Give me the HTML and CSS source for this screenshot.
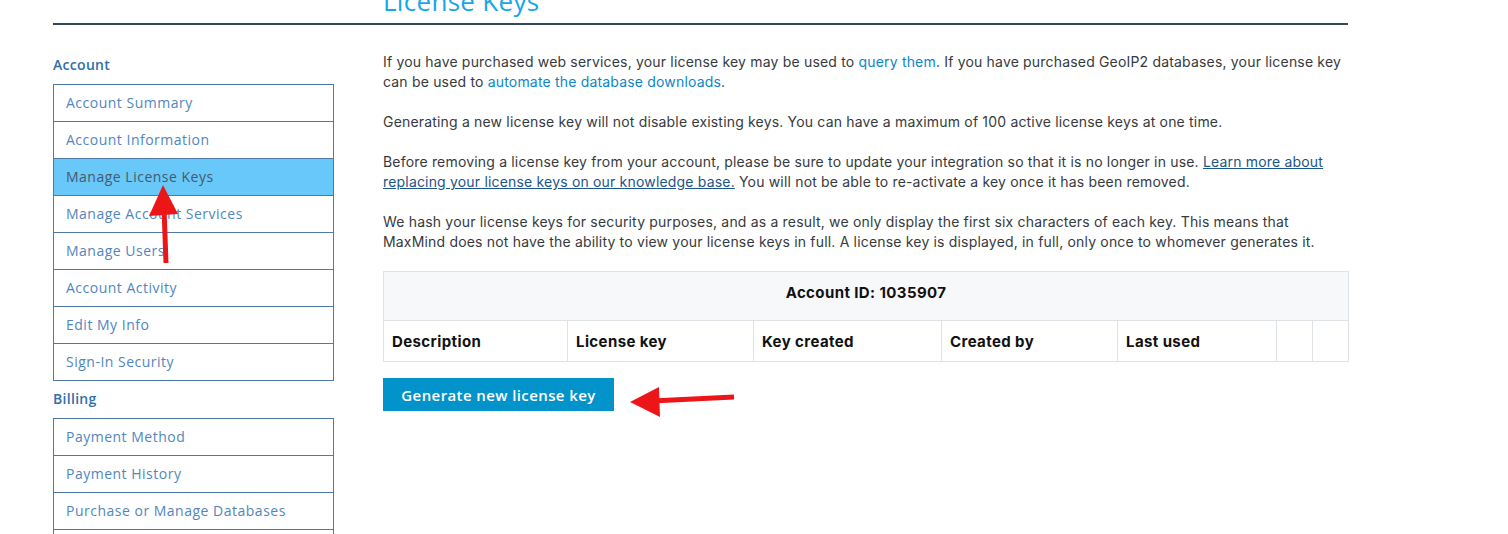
FILE: index.html
```html
<!DOCTYPE html>
<html>

<head>
	<meta charset="UTF-8">
	<title>License Keys</title>
	<link rel="stylesheet" href="styles.css">
</head>

<body>
	<div class="page">
		<header class="page-head">
			<div></div>
			<h1>License Keys</h1>
		</header>

		<div class="layout">
			<nav class="sidebar">
				<h4>Account</h4>
				<ul class="menu">
					<li><a href="#">Account Summary</a></li>
					<li><a href="#">Account Information</a></li>
					<li class="active"><a href="#">Manage License Keys</a></li>
					<li><a href="#">Manage Account Services</a></li>
					<li><a href="#">Manage Users</a></li>
					<li><a href="#">Account Activity</a></li>
					<li><a href="#">Edit My Info</a></li>
					<li><a href="#">Sign-In Security</a></li>
				</ul>
				<h4>Billing</h4>
				<ul class="menu">
					<li><a href="#">Payment Method</a></li>
					<li><a href="#">Payment History</a></li>
					<li><a href="#">Purchase or Manage Databases</a></li>
					<li><a href="#">Order History</a></li>
				</ul>
			</nav>

			<main class="content">
				<p>If you have purchased web services, your license key may be used to <a href="#">query them</a>. If you have purchased GeoIP2 databases, your license key can be used to <a href="#">automate the database downloads</a>.</p>
				<p>Generating a new license key will not disable existing keys. You can have a maximum of 100 active license keys at one time.</p>
				<p>Before removing a license key from your account, please be sure to update your integration so that it is no longer in use. <a class="dark-link" href="#">Learn more about replacing your license keys on our knowledge base.</a> You will not be able to re-activate a key once it has been removed.</p>
				<p>We hash your license keys for security purposes, and as a result, we only display the first six characters of each key. This means that MaxMind does not have the ability to view your license keys in full. A license key is displayed, in full, only once to whomever generates it.</p>

				<table class="keys">
					<colgroup>
						<col class="c1">
						<col class="c2">
						<col class="c3">
						<col class="c4">
						<col class="c5">
						<col class="c6">
						<col class="c7">
					</colgroup>
					<thead>
						<tr class="account-row">
							<th colspan="7">Account ID: 1035907</th>
						</tr>
						<tr class="col-row">
							<th>Description</th>
							<th>License key</th>
							<th>Key created</th>
							<th>Created by</th>
							<th>Last used</th>
							<th></th>
							<th></th>
						</tr>
					</thead>
					<tbody>
					</tbody>
				</table>

				<button type="button" class="button">Generate new license key</button>
			</main>
		</div>
	</div>

	<!-- annotation arrows -->
	<svg class="marks" width="1508" height="534" viewBox="0 0 1508 534">
		<line x1="166" y1="263" x2="164" y2="208" stroke="#ec1619" stroke-width="5" />
		<polygon points="163,185 149,216 178,214" fill="#ec1619" />
		<line x1="734" y1="397" x2="652" y2="401" stroke="#ec1619" stroke-width="5" />
		<polygon points="630,402 659,387 660,417" fill="#ec1619" />
	</svg>
</body>

</html>
```

FILE: styles.css
```css
body {
	margin: 0;
	background: #fff;
	font-family: Inter, "Noto Sans", sans-serif;
	font-size: 14px;
	color: #363a3e;
	overflow: hidden;
}

.page {
	width: 1295px;
	margin-left: 53px;
}

.page-head {
	display: grid;
	grid-template-columns: 281px 1fr;
	column-gap: 49px;
	border-bottom: 2px solid #34495a;
	height: 23px;
	overflow: visible;
}

.page-head h1 {
	margin: -14px 0 0 0;
	font-family: "Open Sans", sans-serif;
	font-weight: 500;
	font-size: 26px;
	line-height: 30px;
	color: #17a6e8;
	letter-spacing: 0.3px;
}

.layout {
	display: grid;
	grid-template-columns: 281px 965px;
	column-gap: 49px;
}

/* sidebar */

.sidebar {
	padding-top: 22px;
	font-family: "Open Sans", sans-serif;
}

.sidebar h4 {
	margin: 0;
	height: 37px;
	line-height: 36px;
	font-size: 14px;
	font-weight: 600;
	color: #2f6fa8;
	letter-spacing: 0.3px;
}

.menu {
	list-style: none;
	margin: 0;
	padding: 0;
	border: 1px solid #4d7aa6;
	border-top: none;
}

.menu li {
	border-top: 1px solid #4d7aa6;
	height: 36px;
}

.menu a {
	display: block;
	padding-left: 12px;
	line-height: 36px;
	color: #5186bd;
	text-decoration: none;
	letter-spacing: 0.5px;
}

.menu .active {
	background: #67c8f9;
}

.menu .active a {
	color: #48596a;
}

/* content */

.content {
	padding-top: 27px;
}

.content p {
	margin: 0 0 20px 0;
	line-height: 20px;
	letter-spacing: 0.18px;
}

.content a {
	color: #0b87c8;
	text-decoration: none;
}

.content a.dark-link {
	color: #1c5587;
	text-decoration: underline;
}

.keys {
	width: 965px;
	border-collapse: collapse;
	table-layout: fixed;
	margin-top: -1px;
	margin-bottom: 16px;
}

.keys th {
	border: 1px solid #dfe2e6;
	font-size: 15px;
	font-weight: 700;
	color: #111;
	text-align: left;
	padding: 0 8px;
	letter-spacing: 0.4px;
}

.account-row th {
	background: #f7f8fa;
	height: 40px;
	padding-bottom: 8px;
	text-align: center;
}

.col-row th {
	height: 40px;
}

.c1 { width: 184px; }
.c2 { width: 186px; }
.c3 { width: 188px; }
.c4 { width: 176px; }
.c5 { width: 159px; }
.c6 { width: 36px; }
.c7 { width: 36px; }

.button {
	display: block;
	width: 231px;
	height: 33px;
	border: none;
	background: #0193c9;
	color: #fff;
	font-family: "Open Sans", sans-serif;
	font-size: 15px;
	font-weight: 600;
	letter-spacing: 0.4px;
	padding: 0;
	cursor: pointer;
}

.marks {
	position: absolute;
	left: 0;
	top: 0;
	pointer-events: none;
}
```
